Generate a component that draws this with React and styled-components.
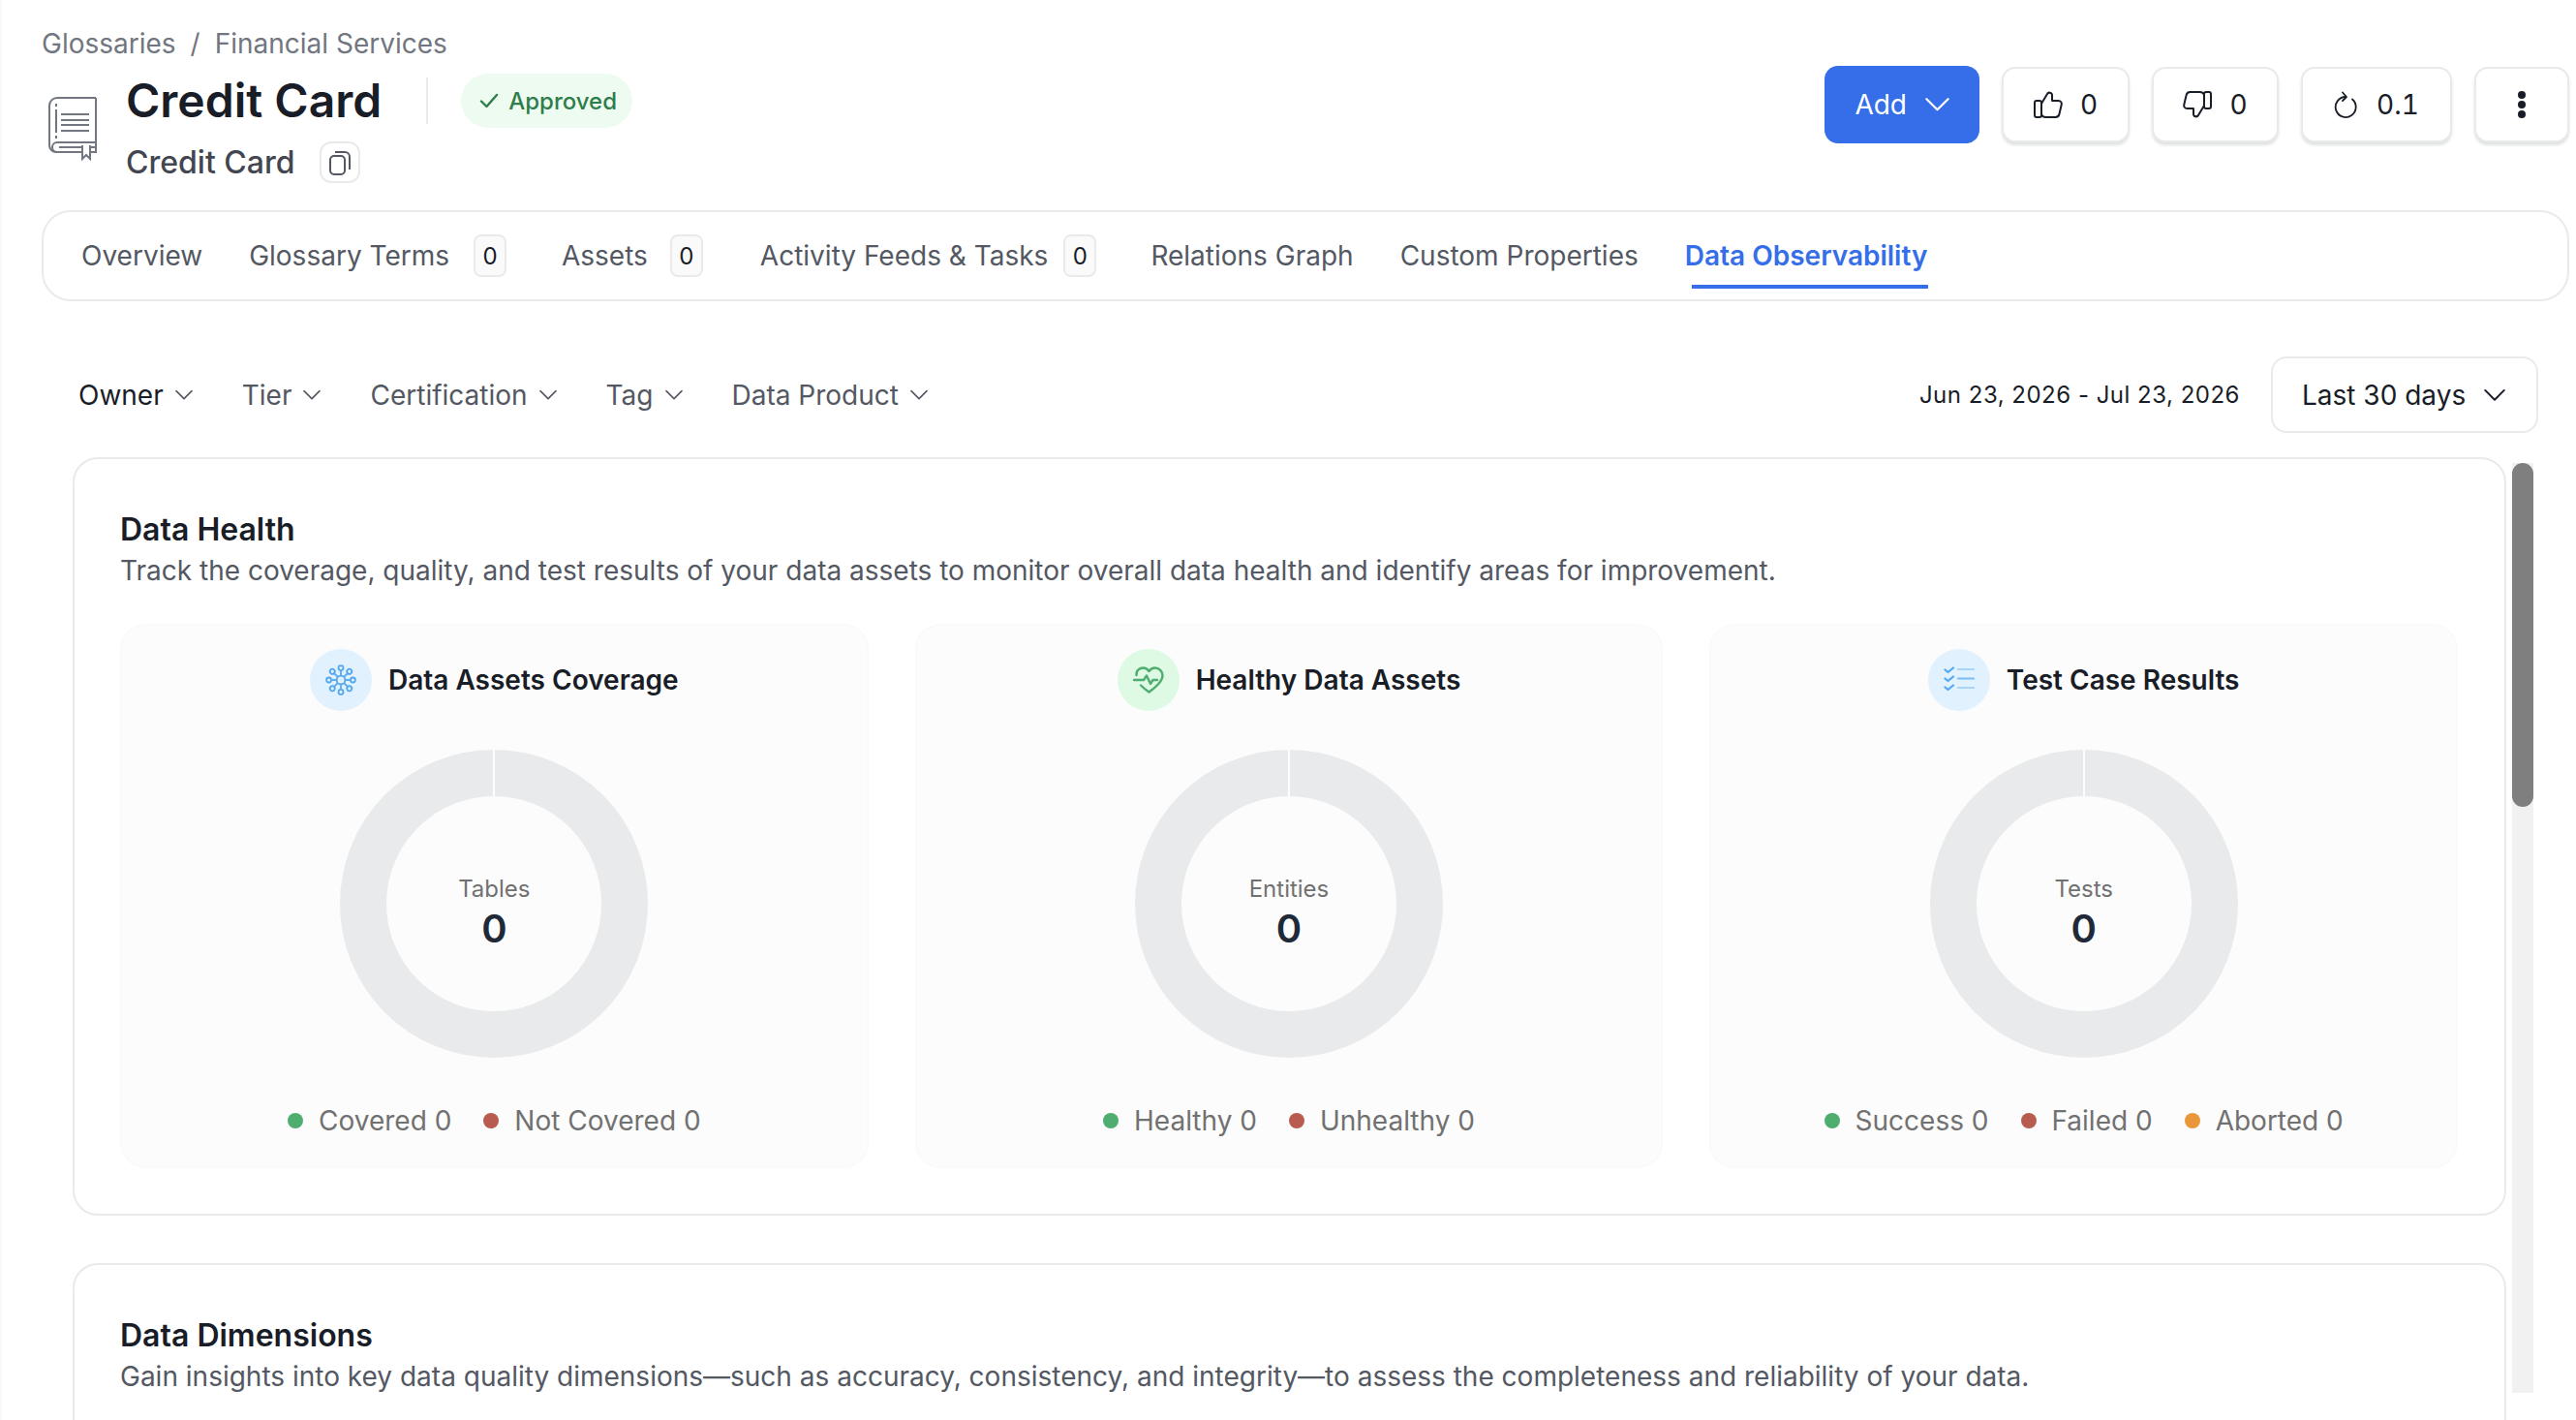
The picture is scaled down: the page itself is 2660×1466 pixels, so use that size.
import React from "react";
import styled, { createGlobalStyle } from "styled-components";

const GlobalStyle = createGlobalStyle`
  html, body {
    margin: 0;
    padding: 0;
    background: #fff;
  }
  body {
    font-family: Inter, "Noto Sans", sans-serif;
    color: #181d27;
  }
  * { box-sizing: border-box; }
`;

const Page = styled.div`
  width: 2660px;
  height: 1466px;
  overflow: hidden;
  padding: 31px 7px 0 41px;
  border-left: 2px solid #f8f9fb;
`;

const Header = styled.header`
  display: flex;
  justify-content: space-between;
  align-items: flex-start;
`;

const HeaderLeft = styled.div`
  display: flex;
  flex-direction: column;
`;

const Breadcrumb = styled.div`
  display: flex;
  gap: 15px;
  height: 28px;
  line-height: 28px;
  font-size: 28px;
  color: #717680;
  margin-bottom: 17px;
`;

const TitleBlock = styled.div`
  display: flex;
  align-items: flex-start;
  gap: 30px;
`;

const BookWrap = styled.div`
  margin: 24px 0 0 7px;
  width: 50px;
  height: 66px;
  display: flex;
`;

const TitleColumn = styled.div`
  display: flex;
  flex-direction: column;
  gap: 14px;
`;

const TitleRow = styled.div`
  display: flex;
  align-items: center;
  height: 56px;
`;

const Title = styled.h1`
  margin: 0;
  font-size: 48px;
  line-height: 56px;
  font-weight: 600;
  color: #181d27;
`;

const TitleDivider = styled.div`
  width: 2px;
  height: 48px;
  background: #e9eaeb;
  margin: 0 34px 0 46px;
`;

const StatusPill = styled.div`
  display: flex;
  align-items: center;
  gap: 10px;
  height: 56px;
  padding: 0 16px 0 19px;
  border-radius: 28px;
  background: #edfbf1;
  color: #2e7d4a;
  font-size: 24px;
  font-weight: 500;
`;

const SubRow = styled.div`
  display: flex;
  align-items: center;
  gap: 26px;
  height: 43px;
`;

const SubTitle = styled.span`
  font-size: 32px;
  font-weight: 500;
  color: #414651;
`;

const CopyButton = styled.div`
  width: 42px;
  height: 43px;
  border: 2px solid #e9eaeb;
  border-radius: 12px;
  display: flex;
  align-items: center;
  justify-content: center;
  color: #535862;
`;

const Actions = styled.div`
  display: flex;
  align-items: center;
  gap: 23px;
  margin-top: 37px;
`;

const AddButton = styled.div`
  display: flex;
  align-items: center;
  gap: 19px;
  height: 80px;
  padding: 0 31px;
  border-radius: 14px;
  background: #356ee8;
  color: #fff;
  font-size: 28px;
  font-weight: 400;
`;

const GhostButton = styled.div`
  display: flex;
  align-items: center;
  justify-content: center;
  gap: ${(props) => props.$gap || 18}px;
  height: 78px;
  width: ${(props) => props.$width}px;
  border: 2px solid #e9eaeb;
  border-radius: 14px;
  background: #fff;
  box-shadow: 0 3px 3px rgba(10, 13, 18, 0.12);
  color: #181d27;
  font-size: 28px;
  font-variant-numeric: tabular-nums;
`;

const TabBar = styled.nav`
  display: flex;
  align-items: stretch;
  gap: 48px;
  height: 94px;
  margin-top: 28px;
  padding: 0 39px;
  border: 2px solid #e9eaeb;
  border-radius: 30px;
`;

const Tab = styled.div`
  position: relative;
  display: flex;
  align-items: center;
  gap: ${(props) => props.$badgeGap || 26}px;
  font-size: 28px;
  font-weight: ${(props) => (props.$active ? 600 : 400)};
  color: ${(props) => (props.$active ? "#356ee8" : "#535862")};
  margin-right: ${(props) => props.$trail || 0}px;
  &::after {
    content: "";
    display: ${(props) => (props.$active ? "block" : "none")};
    position: absolute;
    left: 7px;
    right: -1px;
    bottom: 11px;
    height: 4px;
    background: #356ee8;
  }
`;

const TabBadge = styled.span`
  display: flex;
  align-items: center;
  justify-content: center;
  width: 34px;
  height: 44px;
  border: 2px solid #e9eaeb;
  border-radius: 8px;
  background: #fafafa;
  color: #181d27;
  font-size: 24px;
`;

const FilterRow = styled.div`
  display: flex;
  align-items: center;
  justify-content: space-between;
  height: 79px;
  margin-top: 57px;
  padding: 0 32px 0 38px;
`;

const Filters = styled.div`
  display: flex;
  align-items: center;
  gap: 51px;
`;

const Filter = styled.div`
  display: flex;
  align-items: center;
  gap: 12px;
  font-size: 28px;
  color: ${(props) => (props.$first ? "#181d27" : "#535862")};
`;

const RangeGroup = styled.div`
  display: flex;
  align-items: center;
  gap: 32px;
`;

const DateRange = styled.span`
  font-size: 24px;
  color: #181d27;
  letter-spacing: 0.5px;
`;

const RangeSelect = styled.div`
  display: flex;
  align-items: center;
  gap: 19px;
  width: 276px;
  height: 79px;
  padding: 0 30px;
  border: 2px solid #e9eaeb;
  border-radius: 16px;
  font-size: 28px;
  color: #181d27;
`;

const ContentRow = styled.div`
  display: flex;
  align-items: flex-start;
  gap: 6px;
  margin: 25px 37px 0 32px;
`;

const Sections = styled.div`
  flex: 1;
  display: flex;
  flex-direction: column;
  gap: 49px;
`;

const Section = styled.section`
  border: 2px solid #e9eaeb;
  border-radius: 26px;
  padding: 53px 48px 47px 47px;
`;

const SectionTitle = styled.h2`
  margin: 0;
  font-size: 32px;
  line-height: 40px;
  font-weight: 600;
  color: #181d27;
`;

const SectionText = styled.p`
  margin: 2px 0 35px;
  font-size: 28px;
  line-height: 40px;
  color: #535862;
`;

const CardGrid = styled.div`
  display: grid;
  grid-template-columns: repeat(3, 1fr);
  gap: 48px;
`;

const Card = styled.div`
  display: flex;
  flex-direction: column;
  align-items: center;
  height: 562px;
  padding-top: 24px;
  background: #fcfcfc;
  border: 2px solid #f9fafb;
  border-radius: 26px;
`;

const CardHeading = styled.div`
  display: flex;
  align-items: center;
  gap: 17px;
  font-size: 28px;
  font-weight: 600;
  color: #181d27;
`;

const IconCircle = styled.div`
  width: 64px;
  height: 64px;
  border-radius: 50%;
  background: ${(props) => props.$bg};
  display: flex;
  align-items: center;
  justify-content: center;
`;

const Donut = styled.div`
  position: relative;
  width: 318px;
  height: 318px;
  margin-top: 40px;
`;

const DonutCenter = styled.div`
  position: absolute;
  inset: 0;
  padding-top: 20px;
  display: flex;
  flex-direction: column;
  align-items: center;
  justify-content: center;
`;

const DonutLabel = styled.span`
  font-size: 24px;
  line-height: 32px;
  color: #717171;
`;

const DonutValue = styled.span`
  font-size: 40px;
  line-height: 50px;
  font-weight: 600;
  color: #1f2937;
`;

const Legend = styled.div`
  display: flex;
  align-items: center;
  gap: 33px;
  height: 28px;
  margin-top: 51px;
`;

const LegendItem = styled.div`
  display: flex;
  align-items: center;
  gap: 16px;
  font-size: 28px;
  color: #717171;
`;

const LegendDot = styled.span`
  width: 16px;
  height: 16px;
  border-radius: 50%;
  background: ${(props) => props.$color};
`;

const ScrollTrack = styled.div`
  width: 22px;
  height: 960px;
  margin-top: 6px;
  background: #f1f1f1;
`;

const ScrollThumb = styled.div`
  height: 355px;
  border-radius: 11px;
  background: #7f7f7f;
`;

const GREEN = "#4fae6f";
const RED = "#b85c50";
const ORANGE = "#e9973a";

const Chevron = ({ size = 18, color = "#535862", width = 1.6 }) => (
  <svg width={size} height={size * 0.62} viewBox="0 0 18 11" fill="none">
    <path d="M1 1.5 L9 9.5 L17 1.5" stroke={color} strokeWidth={width} strokeLinecap="round" strokeLinejoin="round" />
  </svg>
);

const BookIcon = () => (
  <svg width="50" height="66" viewBox="0 0 50 66" fill="none" stroke="#717680" strokeWidth="2">
    <path d="M49 1 H9 a8 8 0 0 0 -8 8 V50 a7 7 0 0 0 7 7 H34" />
    <path d="M49 1 V57 H44" />
    <path d="M49 47 H9 a5 5 0 0 0 0 10" />
    <path d="M11 52 H34 M44 52 H49" />
    <path d="M35 50 V64 L39 60 L43 64 V50" />
    <path d="M13 18 H42 M13 24 H42 M13 29 H42 M13 35 H42" />
    <path d="M8 7 v3 M8 13 V37 M8 40 v3" />
  </svg>
);

const CopyIcon = () => (
  <svg width="24" height="26" viewBox="0 0 24 26" fill="none" stroke="#535862" strokeWidth="2">
    <rect x="2" y="6" width="15" height="19" rx="4" />
    <path d="M7 2 H17 a5 5 0 0 1 5 5 V20" />
  </svg>
);

const CheckIcon = () => (
  <svg width="20" height="16" viewBox="0 0 20 16" fill="none" stroke="#2e7d4a" strokeWidth="2.4" strokeLinecap="round" strokeLinejoin="round">
    <path d="M2 8.5 L7.5 14 L18 2" />
  </svg>
);

const ThumbUp = () => (
  <svg width="30" height="28" viewBox="0 0 30 28" fill="none" stroke="#181d27" strokeWidth="2" strokeLinejoin="round">
    <rect x="1" y="10" width="7" height="17" rx="2" />
    <path d="M8 13 L14 3 C15 1 19 1 19 4.5 V10 H25.5 C28 10 29.2 12 28.7 14 L26.5 23.5 C26 26 24.5 27 22.5 27 H13 C10 27 8 25.5 8 23" />
  </svg>
);

const ThumbDown = () => (
  <svg width="30" height="28" viewBox="0 0 30 28" fill="none" stroke="#181d27" strokeWidth="2" strokeLinejoin="round">
    <rect x="22" y="1" width="7" height="17" rx="2" />
    <path d="M22 15 L16 25 C15 27 11 27 11 23.5 V18 H4.5 C2 18 0.8 16 1.3 14 L3.5 4.5 C4 2 5.5 1 7.5 1 H17 C20 1 22 2.5 22 5" />
  </svg>
);

const VersionIcon = () => (
  <svg width="24" height="28" viewBox="0 0 24 28" fill="none" stroke="#181d27" strokeWidth="1.8" strokeLinecap="round" strokeLinejoin="round">
    <path d="M12 6 A10.5 10.5 0 1 0 19 8.5" />
    <path d="M9 1.5 L13 6 L9 10" />
  </svg>
);

const DotsIcon = () => (
  <svg width="10" height="30" viewBox="0 0 10 30" fill="#181d27">
    <circle cx="5" cy="5" r="4" />
    <circle cx="5" cy="15" r="4" />
    <circle cx="5" cy="25" r="4" />
  </svg>
);

const NetworkIcon = () => {
  const spokes = [0, 45, 90, 135, 180, 225, 270, 315];
  return (
    <svg width="32" height="32" viewBox="-16 -16 32 32" fill="none" stroke="#53a8f0" strokeWidth="1.8">
      <circle r="4.4" />
      {spokes.map((a) => (
        <g key={a} transform={`rotate(${a})`}>
          <path d="M0 -4.4 V-9.5" />
          <circle cy="-12.4" r="2.5" />
        </g>
      ))}
    </svg>
  );
};

const HeartIcon = () => (
  <svg width="32" height="28" viewBox="0 0 32 28" fill="none" stroke="#4fae6f" strokeWidth="2.4" strokeLinecap="round" strokeLinejoin="round">
    <path d="M3.5 9 C3 4 7 1.5 10.5 1.5 C13 1.5 15 2.8 16.5 5 C18 2.8 20 1.5 22.5 1.5 C27 1.5 30.5 5 30.5 9.5 C30.5 16 22 22.5 16.5 26.5 C13.5 24.5 10.5 22 8 19.5" />
    <path d="M1 14 H11 L14 9.5 L18 18 L20.5 14 H25" />
  </svg>
);

const ChecklistIcon = () => (
  <svg width="32" height="28" viewBox="0 0 32 28" fill="none" strokeWidth="2.2" strokeLinecap="round" strokeLinejoin="round">
    <path d="M1.5 3.5 L4.5 6 L10 1.5 M1.5 12.5 L4.5 15 L10 10.5 M1.5 21.5 L4.5 24 L10 19.5" stroke="#53a8f0" />
    <path d="M15 3 H31 M15 22 H31" stroke="#a8d4f8" />
    <path d="M15 12.5 H31" stroke="#79bdf5" />
  </svg>
);

const DonutChart = () => (
  <svg width="318" height="318" viewBox="0 0 318 318" fill="none">
    <circle cx="159" cy="159" r="135" stroke="#e9eaeb" strokeWidth="48" />
    <path d="M159 0 V48" stroke="#fcfcfc" strokeWidth="2" />
  </svg>
);

const TABS = [
  { label: "Overview" },
  { label: "Glossary Terms", badge: 0, badgeGap: 25, trail: 9 },
  { label: "Assets", badge: 0, badgeGap: 23, trail: 11 },
  { label: "Activity Feeds & Tasks", badge: 0, badgeGap: 16, trail: 8 },
  { label: "Relations Graph" },
  { label: "Custom Properties" },
  { label: "Data Observability", active: true },
];

const FILTERS = ["Owner", "Tier", "Certification", "Tag", "Data Product"];

const CARDS = [
  {
    title: "Data Assets Coverage",
    icon: <NetworkIcon />,
    bg: "#e1f1fe",
    label: "Tables",
    legend: [
      ["Covered 0", GREEN],
      ["Not Covered 0", RED],
    ],
  },
  {
    title: "Healthy Data Assets",
    icon: <HeartIcon />,
    bg: "#def9e4",
    label: "Entities",
    legend: [
      ["Healthy 0", GREEN],
      ["Unhealthy 0", RED],
    ],
  },
  {
    title: "Test Case Results",
    icon: <ChecklistIcon />,
    bg: "#e1f1fe",
    label: "Tests",
    legend: [
      ["Success 0", GREEN],
      ["Failed 0", RED],
      ["Aborted 0", ORANGE],
    ],
  },
];

function App() {
  return (
    <Page>
      <GlobalStyle />
      <Header>
        <HeaderLeft>
          <Breadcrumb>
            <span>Glossaries</span>
            <span>/</span>
            <span>Financial Services</span>
          </Breadcrumb>
          <TitleBlock>
            <BookWrap>
              <BookIcon />
            </BookWrap>
            <TitleColumn>
              <TitleRow>
                <Title>Credit Card</Title>
                <TitleDivider />
                <StatusPill>
                  <CheckIcon />
                  Approved
                </StatusPill>
              </TitleRow>
              <SubRow>
                <SubTitle>Credit Card</SubTitle>
                <CopyButton>
                  <CopyIcon />
                </CopyButton>
              </SubRow>
            </TitleColumn>
          </TitleBlock>
        </HeaderLeft>
        <Actions>
          <AddButton>
            Add
            <Chevron size={25} color="#fff" />
          </AddButton>
          <GhostButton $width={132}>
            <ThumbUp />0
          </GhostButton>
          <GhostButton $width={131}>
            <ThumbDown />0
          </GhostButton>
          <GhostButton $width={156} $gap={20}>
            <VersionIcon />0.1
          </GhostButton>
          <GhostButton $width={98}>
            <DotsIcon />
          </GhostButton>
        </Actions>
      </Header>

      <TabBar>
        {TABS.map((tab) => (
          <Tab key={tab.label} $active={tab.active} $trail={tab.trail} $badgeGap={tab.badgeGap}>
            {tab.label}
            {tab.badge !== undefined && <TabBadge>{tab.badge}</TabBadge>}
          </Tab>
        ))}
      </TabBar>

      <FilterRow>
        <Filters>
          {FILTERS.map((name, i) => (
            <Filter key={name} $first={i === 0}>
              {name}
              <Chevron size={18} />
            </Filter>
          ))}
        </Filters>
        <RangeGroup>
          <DateRange>Jun 23, 2026 - Jul 23, 2026</DateRange>
          <RangeSelect>
            Last 30 days
            <Chevron size={22} color="#181d27" />
          </RangeSelect>
        </RangeGroup>
      </FilterRow>

      <ContentRow>
        <Sections>
          <Section>
            <SectionTitle>Data Health</SectionTitle>
            <SectionText>
              Track the coverage, quality, and test results of your data assets to monitor overall data health and identify areas for improvement.
            </SectionText>
            <CardGrid>
              {CARDS.map((card) => (
                <Card key={card.title}>
                  <CardHeading>
                    <IconCircle $bg={card.bg}>{card.icon}</IconCircle>
                    {card.title}
                  </CardHeading>
                  <Donut>
                    <DonutChart />
                    <DonutCenter>
                      <DonutLabel>{card.label}</DonutLabel>
                      <DonutValue>0</DonutValue>
                    </DonutCenter>
                  </Donut>
                  <Legend>
                    {card.legend.map(([text, color]) => (
                      <LegendItem key={text}>
                        <LegendDot $color={color} />
                        {text}
                      </LegendItem>
                    ))}
                  </Legend>
                </Card>
              ))}
            </CardGrid>
          </Section>
          <Section>
            <SectionTitle>Data Dimensions</SectionTitle>
            <SectionText>
              Gain insights into key data quality dimensions—such as accuracy, consistency, and integrity—to assess the completeness and reliability of your data.
            </SectionText>
          </Section>
        </Sections>
        <ScrollTrack>
          <ScrollThumb />
        </ScrollTrack>
      </ContentRow>
    </Page>
  );
}

export default App;
